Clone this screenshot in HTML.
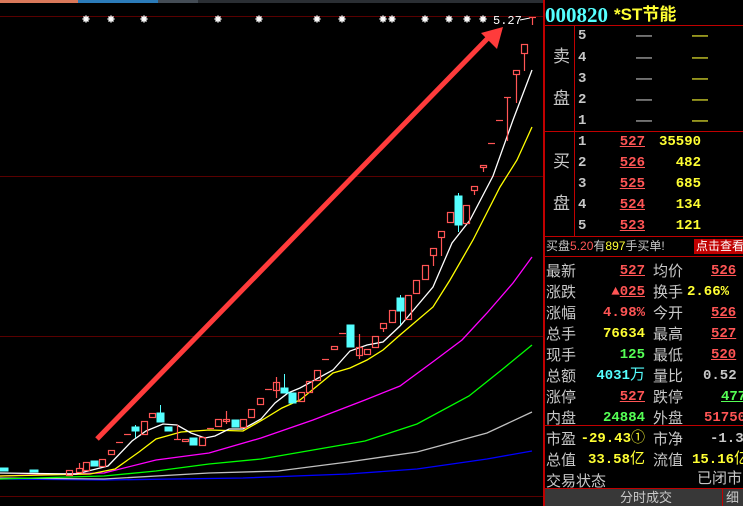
<!DOCTYPE html>
<html><head><meta charset="utf-8"><style>
*{margin:0;padding:0;box-sizing:border-box}
body{width:743px;height:506px;background:#000;overflow:hidden;position:relative;font-family:"Liberation Sans","Noto Sans CJK SC",sans-serif}
.a{position:absolute;white-space:nowrap}
.l{color:#c8c8c8;font-size:15px;line-height:16px}
.n{font-family:"Liberation Mono","Noto Sans CJK SC",monospace;font-weight:bold;font-size:14px;line-height:16px;text-align:right}
.r{color:#ff5555}.y{color:#ffff33}.c{color:#55ffff}.g{color:#55ff55}.w{color:#c8c8c8}
.u{text-decoration:underline}
.hl{position:absolute;background:#c00000;height:1px}
</style></head><body>
<div class="a" style="left:0;top:0;width:78px;height:3px;background:#d9785a"></div>
<div class="a" style="left:78px;top:0;width:80px;height:3px;background:#2b7bb9"></div>
<div class="a" style="left:158px;top:0;width:40px;height:3px;background:#444c55"></div>
<div class="a" style="left:198px;top:0;width:345px;height:3px;background:#2a2e33"></div>
<svg class="a" style="left:0;top:0" width="543" height="506">
<defs><g id="s" stroke="#fff" stroke-width="1.5"><line x1="-3.5" y1="0" x2="3.5" y2="0"/><line x1="0" y1="-3.5" x2="0" y2="3.5"/><line x1="-2.5" y1="-2.5" x2="2.5" y2="2.5"/><line x1="-2.5" y1="2.5" x2="2.5" y2="-2.5"/></g></defs>
<g stroke="#5a0000" stroke-width="1">
<line x1="0" y1="16.5" x2="543" y2="16.5"/><line x1="0" y1="176.5" x2="543" y2="176.5"/>
<line x1="0" y1="336.5" x2="543" y2="336.5"/><line x1="0" y1="496.5" x2="543" y2="496.5"/>
</g>
<use href="#s" x="86" y="19"/><use href="#s" x="111" y="19"/><use href="#s" x="144" y="19"/><use href="#s" x="218" y="19"/><use href="#s" x="259" y="19"/><use href="#s" x="317" y="19"/><use href="#s" x="342" y="19"/><use href="#s" x="383" y="19"/><use href="#s" x="392" y="19"/><use href="#s" x="425" y="19"/><use href="#s" x="449" y="19"/><use href="#s" x="467" y="19"/><use href="#s" x="483" y="19"/>
<text x="493" y="24" fill="#fff" font-family="Liberation Mono" font-size="12">5.27</text>
<line x1="520" y1="20" x2="530" y2="18" stroke="#fff"/>
<g fill="none" stroke-width="1.3">
<polyline stroke="#0000ff" points="0,479 104,480 243,478 348,474 417,469 487,459 532,451"/>
<polyline stroke="#c0c0c0" points="0,478 104,479 209,473 278,471 348,462 417,452 487,433 532,412"/>
<polyline stroke="#00ff00" points="0,479 104,476 156,471 209,464 261,459 313,450 365,441 417,424 469,396 504,368 532,345"/>
<polyline stroke="#ff00ff" points="0,476 59,474 104,473 156,460 209,453 261,438 313,420 365,400 400,386 434,361 462,340 487,313 513,283 532,257"/>
<polyline stroke="#ffff00" points="0,476 90,474 115,469 139,452 156,439 181,432 209,430 243,431 264,419 282,408 300,400 333,373 350,368 367,360 383,350 400,335 433,307 450,280 473,240 500,187 517,160 532,127"/>
<polyline stroke="#ffffff" points="0,473 76,474 108,466 132,441 146,431 163,424 177,425 191,433 205,438 215,436 229,429 243,429 261,419 275,403 288,393 300,388 333,370 350,351 367,345 383,342 400,326 433,287 452,243 470,220 493,176 513,120 532,70"/>
</g>
<g stroke="#ff5555" fill="none" stroke-width="1.2">
<rect x="66.5" y="470.5" width="6" height="5"/><rect x="76.5" y="468.5" width="6" height="4"/><line x1="79.5" y1="463" x2="79.5" y2="468"/>
<rect x="83.5" y="462.5" width="6" height="8"/><rect x="99.5" y="459.5" width="6" height="7"/><rect x="108.5" y="450.5" width="6" height="4"/>
<line x1="116" y1="442.5" x2="123" y2="442.5"/><line x1="124" y1="434.5" x2="131" y2="434.5"/>
<rect x="141.5" y="421.5" width="6" height="13"/><rect x="149.5" y="413.5" width="6" height="4"/>
<line x1="174" y1="439.5" x2="181" y2="439.5"/><line x1="177.5" y1="425" x2="177.5" y2="439"/>
<rect x="182.5" y="439.5" width="6" height="2"/><rect x="199.5" y="437.5" width="6" height="8"/>
<line x1="207" y1="428.5" x2="214" y2="428.5"/><rect x="215.5" y="419.5" width="6" height="7"/>
<rect x="223.5" y="419.5" width="6" height="2"/><line x1="226.5" y1="411" x2="226.5" y2="424"/>
<rect x="240.5" y="419.5" width="6" height="8"/><rect x="248.5" y="409.5" width="6" height="8"/><rect x="257.5" y="398.5" width="6" height="6"/>
<line x1="265" y1="389.5" x2="272" y2="389.5"/><rect x="273.5" y="382.5" width="6" height="8"/><line x1="276.5" y1="377" x2="276.5" y2="398"/>
<rect x="298.5" y="392.5" width="6" height="9"/><rect x="306.5" y="381.5" width="6" height="11"/><rect x="314.5" y="370.5" width="6" height="10"/>
<line x1="322" y1="359.5" x2="329" y2="359.5"/><rect x="331.5" y="346.5" width="6" height="3"/><line x1="339" y1="333.5" x2="346" y2="333.5"/>
<rect x="356.5" y="347.5" width="6" height="8"/><line x1="359.5" y1="334" x2="359.5" y2="359"/>
<rect x="364.5" y="349.5" width="6" height="5"/><rect x="372.5" y="336.5" width="6" height="11"/>
<rect x="380.5" y="323.5" width="6" height="5"/><line x1="383.5" y1="328" x2="383.5" y2="332"/>
<rect x="389.5" y="310.5" width="6" height="12"/><rect x="405.5" y="295.5" width="6" height="24"/>
<rect x="413.5" y="280.5" width="6" height="13"/><rect x="422.5" y="265.5" width="6" height="14"/>
<rect x="430.5" y="248.5" width="6" height="7"/><line x1="433.5" y1="255" x2="433.5" y2="266"/>
<rect x="438.5" y="231.5" width="6" height="6"/><line x1="441.5" y1="237" x2="441.5" y2="256"/>
<rect x="447.5" y="212.5" width="6" height="10"/><rect x="463.5" y="205.5" width="6" height="18"/>
<rect x="471.5" y="186.5" width="6" height="4"/><line x1="474.5" y1="190" x2="474.5" y2="195"/>
<rect x="480.5" y="165.5" width="6" height="2"/><line x1="483.5" y1="167" x2="483.5" y2="172"/>
<line x1="488" y1="143.5" x2="495" y2="143.5"/><line x1="496" y1="120.5" x2="503" y2="120.5"/>
<line x1="504" y1="97.5" x2="511" y2="97.5"/><line x1="507.5" y1="97" x2="507.5" y2="141"/>
<rect x="513.5" y="70.5" width="6" height="4"/><line x1="516.5" y1="74" x2="516.5" y2="103"/>
<rect x="521.5" y="44.5" width="6" height="9"/><line x1="524.5" y1="53" x2="524.5" y2="71"/>
<line x1="529" y1="17.5" x2="536" y2="17.5"/><line x1="532.5" y1="17" x2="532.5" y2="25"/>
</g>
<g fill="#55ffff" stroke="#55ffff">
<rect x="91" y="461" width="7" height="5"/><rect x="132" y="427" width="7" height="4"/><line x1="135.5" y1="425" x2="135.5" y2="438"/>
<rect x="157" y="413" width="7" height="9"/><line x1="160.5" y1="405" x2="160.5" y2="413"/><rect x="165" y="427" width="7" height="4"/>
<rect x="190" y="438" width="7" height="7"/><rect x="232" y="420" width="7" height="7"/>
<rect x="281" y="388" width="7" height="5"/><line x1="284.5" y1="374" x2="284.5" y2="388"/><rect x="289" y="393" width="7" height="10"/>
<rect x="347" y="325" width="7" height="22"/><rect x="397" y="298" width="7" height="13"/><line x1="400.5" y1="295" x2="400.5" y2="325"/>
<rect x="455" y="196" width="7" height="29"/><line x1="458.5" y1="193" x2="458.5" y2="232"/>
<rect x="0" y="468" width="8" height="3"/><rect x="30" y="470" width="8" height="2"/>
</g>
<line x1="97" y1="439" x2="488" y2="38" stroke="#ff3b3b" stroke-width="5"/>
<polygon points="503,27 481,33 497,49" fill="#ff3b3b"/>
</svg>
<!-- right panel -->
<div class="a" style="left:543px;top:0;width:2px;height:506px;background:#c00000"></div>
<div class="a" style="left:545px;top:3px;font-family:'Liberation Serif',serif;font-weight:bold;font-size:21px;color:#55ffff;line-height:24px">000820</div>
<div class="a y" style="left:614px;top:5px;font-size:17px;font-weight:bold;line-height:20px">*ST节能</div>
<div class="hl" style="left:545px;top:25px;width:198px"></div>
<div class="hl" style="left:545px;top:131px;width:198px"></div>
<div class="hl" style="left:545px;top:236px;width:198px"></div>
<div class="hl" style="left:545px;top:256px;width:198px"></div>
<div class="hl" style="left:545px;top:425px;width:198px"></div>
<div class="hl" style="left:545px;top:488px;width:198px"></div>
<div class="a" style="left:574px;top:25px;width:1px;height:211px;background:#c00000"></div>
<div class="a l" style="left:553px;top:49px;font-size:17px">卖</div>
<div class="a l" style="left:553px;top:91px;font-size:17px">盘</div>
<div class="a l" style="left:553px;top:154px;font-size:17px">买</div>
<div class="a l" style="left:553px;top:196px;font-size:17px">盘</div>
<div class="a n w" style="left:578px;top:28px">5</div><div class="a n w" style="left:578px;top:50px">4</div><div class="a n w" style="left:578px;top:71px">3</div><div class="a n w" style="left:578px;top:92px">2</div><div class="a n w" style="left:578px;top:113px">1</div>
<div class="a w" style="left:636px;top:28px;line-height:16px">—</div><div class="a w" style="left:636px;top:50px;line-height:16px">—</div><div class="a w" style="left:636px;top:71px;line-height:16px">—</div><div class="a w" style="left:636px;top:92px;line-height:16px">—</div><div class="a w" style="left:636px;top:113px;line-height:16px">—</div>
<div class="a y" style="left:692px;top:28px;line-height:16px">—</div><div class="a y" style="left:692px;top:50px;line-height:16px">—</div><div class="a y" style="left:692px;top:71px;line-height:16px">—</div><div class="a y" style="left:692px;top:92px;line-height:16px">—</div><div class="a y" style="left:692px;top:113px;line-height:16px">—</div>
<div class="a n w" style="left:578px;top:134px">1</div><div class="a n w" style="left:578px;top:155px">2</div><div class="a n w" style="left:578px;top:176px">3</div><div class="a n w" style="left:578px;top:197px">4</div><div class="a n w" style="left:578px;top:218px">5</div>
<div class="a n r u" style="right:98px;top:134px">527</div><div class="a n r u" style="right:98px;top:155px">526</div><div class="a n r u" style="right:98px;top:176px">525</div><div class="a n r u" style="right:98px;top:197px">524</div><div class="a n r u" style="right:98px;top:218px">523</div>
<div class="a n y" style="right:42px;top:134px">35590</div><div class="a n y" style="right:42px;top:155px">482</div><div class="a n y" style="right:42px;top:176px">685</div><div class="a n y" style="right:42px;top:197px">134</div><div class="a n y" style="right:42px;top:218px">121</div>
<div class="a w" style="left:546px;top:239px;font-size:12px;line-height:15px">买盘<span class="r">5.20</span>有<span class="y">897</span>手买单!</div>
<div class="a" style="left:694px;top:239px;width:49px;height:15px;background:#c00000;color:#fff;font-size:12px;line-height:15px;padding-left:2px">点击查看</div>
<div class="a l" style="left:546px;top:261px;line-height:21px">最新<br>涨跌<br>涨幅<br>总手<br>现手<br>总额<br>涨停<br>内盘</div>
<div class="a l" style="left:653px;top:261px;line-height:21px">均价<br>换手<br>今开<br>最高<br>最低<br>量比<br>跌停<br>外盘</div>
<div class="a n r u" style="right:98px;top:263px">527</div>
<div class="a n r" style="right:98px;top:284px">▲<span class="u">025</span></div>
<div class="a n r" style="right:98px;top:305px">4.98%</div>
<div class="a n y" style="right:98px;top:326px">76634</div>
<div class="a n g" style="right:98px;top:347px">125</div>
<div class="a n c" style="right:98px;top:368px">4031<span style="font-weight:normal;font-size:15px">万</span></div>
<div class="a n r u" style="right:98px;top:389px">527</div>
<div class="a n g" style="right:98px;top:410px">24884</div>
<div class="a n r u" style="left:711px;top:263px">526</div>
<div class="a n y" style="left:687px;top:284px">2.66%</div>
<div class="a n r u" style="left:711px;top:305px">526</div>
<div class="a n r u" style="left:711px;top:326px">527</div>
<div class="a n r u" style="left:711px;top:347px">520</div>
<div class="a n w" style="left:703px;top:368px">0.52</div>
<div class="a n g u" style="left:721px;top:389px">477</div>
<div class="a n r" style="left:704px;top:410px">51750</div>
<div class="a l" style="left:546px;top:429px;line-height:21px">市盈<br>总值<br>交易状态</div>
<div class="a l" style="left:653px;top:429px;line-height:21px">市净<br>流值</div>
<div class="a n y" style="right:98px;top:431px">-29.43<span style="font-weight:normal">①</span></div>
<div class="a n y" style="right:98px;top:452px">33.58<span style="font-weight:normal;font-size:15px">亿</span></div>
<div class="a n w" style="left:710px;top:431px">-1.39</div>
<div class="a n y" style="left:692px;top:452px">15.16<span style="font-weight:normal;font-size:15px">亿</span></div>
<div class="a l" style="left:697px;top:471px">已闭市</div>
<div class="a" style="left:545px;top:489px;width:198px;height:17px;background:#383838"></div>
<div class="a l" style="left:620px;top:490px;font-size:13px">分时成交</div>
<div class="a" style="left:722px;top:489px;width:1px;height:17px;background:#c00000"></div>
<div class="a l" style="left:726px;top:490px;font-size:13px">细</div>
</body></html>
